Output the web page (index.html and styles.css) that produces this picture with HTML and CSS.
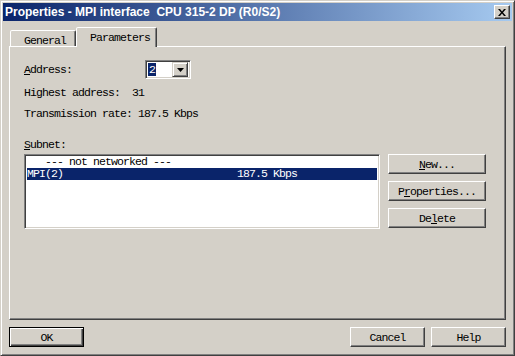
FILE: index.html
```html
<!DOCTYPE html>
<html lang="en">
<head>
<meta charset="utf-8">
<title>Properties - MPI interface</title>
<link rel="stylesheet" href="styles.css">
</head>
<body>
<div class="window">
  <div class="titlebar">
    <span class="title">Properties - MPI interface&nbsp; CPU 315-2 DP (R0/S2)</span>
    <span class="close">
      <svg width="8" height="7" viewBox="0 0 8 7"><path d="M0 0h2l2 2.5L6 0h2L5 3.5 8 7H6L4 4.5 2 7H0l3-3.5z" fill="#000"/></svg>
    </span>
  </div>

  <!-- tab strip -->
  <div class="tabs">
    <div class="tab">General</div>
    <div class="tab active">Parameters</div>
  </div>

  <div class="panel">
    <div class="addr">
      <span class="lbl"><u>A</u>ddress:</span>
      <div class="combo">
        <span class="val"><span class="hl">2</span></span>
        <span class="drop"><svg width="7" height="4" viewBox="0 0 7 4"><path d="M0 0h7L3.5 4z" fill="#000"/></svg></span>
      </div>
    </div>
    <p class="info first">Highest address:&nbsp; 31</p>
    <p class="info">Transmission rate: 187.5 Kbps</p>
    <p class="info subnet-lbl"><u>S</u>ubnet:</p>

    <div class="subnet">
      <div class="list">
        <div class="item">&nbsp;&nbsp;&nbsp;--- not networked ---</div>
        <div class="item sel"><span class="name">MPI(2)</span>187.5 Kbps</div>
      </div>
      <div class="side">
        <button class="btn"><u>N</u>ew...</button>
        <button class="btn">P<u>r</u>operties...</button>
        <button class="btn">De<u>l</u>ete</button>
      </div>
    </div>
  </div>

  <div class="footer">
    <button class="btn wide default">OK</button>
    <span class="grow"></span>
    <button class="btn wide">Cancel</button>
    <button class="btn wide">Help</button>
  </div>
</div>
</body>
</html>
```

FILE: styles.css
```css
:root{--face:#d4d0c8;--hi:#fff;--sh:#808080;--dk:#404040;--sel:#0a246a}
*{box-sizing:border-box}
body{margin:0;background:var(--face);font-family:"Liberation Mono","DejaVu Sans Mono",monospace;font-size:11.5px;letter-spacing:-.9px;color:#000}
u{text-decoration:underline;text-underline-offset:1px}

.window{width:515px;height:356px;padding:2px;background:var(--face);border:1px solid;border-color:var(--face) var(--dk) var(--dk) var(--face);box-shadow:inset 1px 1px var(--hi),inset -1px -1px var(--sh)}

.titlebar{height:18px;display:flex;align-items:center;justify-content:space-between;padding:0 2px 0 2px;background:linear-gradient(to right,#0a246a,#a6caf0)}
.title{color:#fff;font-family:"Liberation Sans",Arial,sans-serif;font-weight:700;font-size:12px;letter-spacing:0;white-space:nowrap}
.close{width:16px;height:14px;display:flex;align-items:center;justify-content:center;background:var(--face);border:1px solid;border-color:var(--hi) var(--dk) var(--dk) var(--hi);box-shadow:inset -1px -1px var(--sh)}

.tabs{display:flex;align-items:flex-end;height:19px;margin:6px 0 0 7px;position:relative;z-index:1}
.tab{height:16px;width:66px;padding:3px 0 0 13px;background:var(--face);border:1px solid;border-bottom:0;border-color:var(--hi) var(--dk) transparent var(--hi);border-radius:2px 2px 0 0;box-shadow:inset -1px 0 var(--sh)}
.tab.active{height:20px;width:81px;padding-top:3px;margin-bottom:-1px;margin-left:0}

.panel{width:497px;height:274px;margin-left:6px;padding:13px 0 0 14px;border:1px solid;border-color:var(--hi) var(--dk) var(--dk) var(--hi);box-shadow:inset -1px -1px var(--sh)}

.addr{display:flex;align-items:center;height:19px}
.lbl{width:121px}
.combo{width:46px;height:19px;display:flex;align-items:center;justify-content:space-between;background:#fff;border:1px solid;border-color:var(--sh) var(--hi) var(--hi) var(--sh);box-shadow:inset 1px 1px var(--dk),inset -1px -1px var(--face);padding:2px}
.hl{display:inline-block;background:var(--sel);color:#fff;width:8px;height:13px;line-height:13px;padding-left:1px}
.drop{width:16px;height:15px;display:flex;align-items:center;justify-content:center;background:var(--face);border:1px solid;border-color:var(--face) var(--dk) var(--dk) var(--face);box-shadow:inset 1px 1px var(--hi),inset -1px -1px var(--sh)}

.info{margin:9px 0 0;line-height:12px}
.info.first{margin-top:8px}
.subnet-lbl{margin-top:19px}

.subnet{display:flex;gap:8px;margin-top:3px}
.list{width:356px;height:75px;background:#fff;border:1px solid;border-color:var(--sh) var(--hi) var(--hi) var(--sh);box-shadow:inset 1px 1px var(--dk),inset -1px -1px var(--face);padding:1px 2px 0}
.item{height:12px;line-height:12px;white-space:nowrap}
.item.sel{background:var(--sel);color:#fff}
.name{display:inline-block;width:210px}

.side{display:flex;flex-direction:column;gap:7px}
.btn{appearance:none;font:inherit;letter-spacing:inherit;color:#000;background:var(--face);width:98px;height:20px;padding:0;border:1px solid;border-color:var(--hi) var(--dk) var(--dk) var(--hi);box-shadow:inset -1px -1px var(--sh)}

.footer{display:flex;gap:6px;margin:7px 6px 0 6px}
.btn.wide{width:75px}
.btn.default{border-color:#000;box-shadow:inset 1px 1px var(--hi),inset -1px -1px var(--dk),inset -2px -2px var(--sh)}
.grow{flex:1}
```
